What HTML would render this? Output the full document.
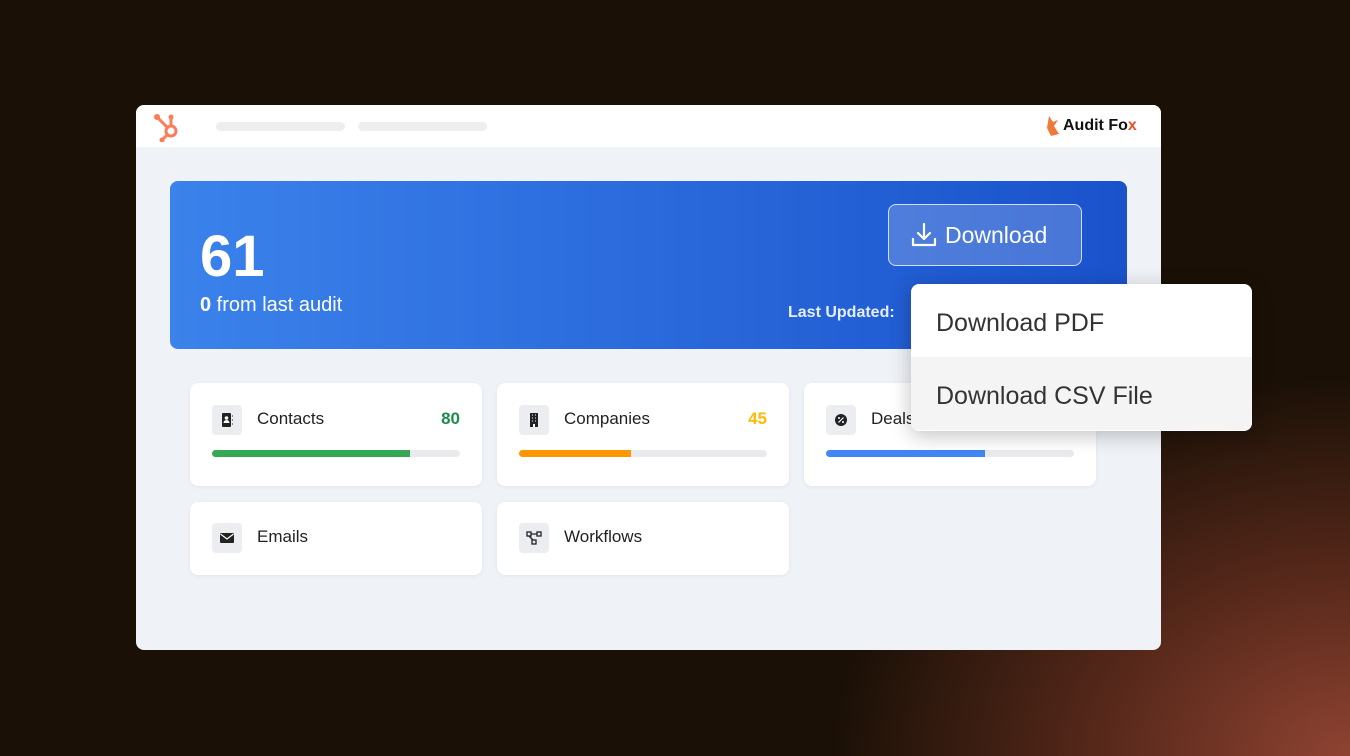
<!DOCTYPE html>
<html><head><style>
*{margin:0;padding:0;box-sizing:border-box}
body{width:1350px;height:756px;overflow:hidden;font-family:"Liberation Sans",sans-serif;
background:radial-gradient(ellipse 520px 380px at 1350px 756px,#8f4332 0%,#5a2a1c 45%,#1a1006 100%),#1a1006;position:relative}
.win{position:absolute;left:136px;top:105px;width:1025px;height:545px;background:#eff2f7;border-radius:8px;overflow:hidden}
.top{height:42px;background:#fff;position:relative}
.pill{position:absolute;top:17px;height:9px;border-radius:5px;background:#eeeeee}
.hero{position:absolute;left:34px;top:76px;width:957px;height:168px;border-radius:8px;background:linear-gradient(90deg,#3b82eb,#1a52cc);color:#fff}
.card{position:absolute;background:#fff;border-radius:8px;box-shadow:0 1px 4px rgba(0,0,0,.06)}
.ic{position:absolute;left:22px;width:30px;height:30px;border-radius:4px;background:#ebedf0}
.ic svg{position:absolute;left:7px;top:7px}
.lbl{position:absolute;left:67px;font-size:17px;color:#222}
.bar{position:absolute;left:22px;top:67px;width:248px;height:7px;border-radius:4px;background:#e8eaed;overflow:hidden}
.bar i{display:block;height:100%}
.dd{position:absolute;left:911px;top:284px;width:341px;height:147px;background:#fff;border-radius:8px;box-shadow:0 4px 20px rgba(0,0,0,.25);overflow:hidden}
.dd div{height:73px;line-height:78px;padding-left:25px;font-size:25px;color:#333}
</style></head><body>
<div class="win">
 <div class="top">
  <svg style="position:absolute;left:17px;top:7px" width="30" height="30" viewBox="0 0 30 30"><g fill="none" stroke="#ff7a59" stroke-width="3"><circle cx="18" cy="19" r="5"/><line x1="4" y1="5" x2="14" y2="15"/><line x1="18" y1="6" x2="18" y2="13"/><line x1="14" y1="23" x2="9" y2="28"/></g><circle cx="4" cy="5" r="3" fill="#ff7a59"/><circle cx="18" cy="5" r="2.5" fill="#ff7a59"/><circle cx="9" cy="28" r="2.5" fill="#ff7a59"/></svg>
  <div class="pill" style="left:80px;width:129px"></div>
  <div class="pill" style="left:222px;width:129px"></div>
  <svg style="position:absolute;left:910px;top:11px" width="14" height="20" viewBox="0 0 14 20"><path d="M3 0 L7 6 L12 4 L8 10 L13 18 L5 20 L1 12 Z" fill="#f07a3a"/></svg>
  <div style="position:absolute;left:927px;top:12px;font-weight:bold;font-size:16px;color:#111">Audit Fo<span style="color:#e8502a">x</span></div>
 </div>
 <div class="hero">
  <div style="position:absolute;left:30px;top:42px;font-size:58px;font-weight:bold">61</div>
  <div style="position:absolute;left:30px;top:113px;font-size:20px"><b>0</b> from last audit</div>
  <div style="position:absolute;left:718px;top:23px;width:194px;height:62px;border:1.5px solid #cfe0ff;border-radius:8px;background:rgba(255,255,255,.2);font-size:23px;line-height:60px;padding-left:56px">Download
   <svg style="position:absolute;left:22px;top:17px" width="26" height="26" viewBox="0 0 26 26" fill="none" stroke="#fff" stroke-width="2.2" stroke-linecap="round" stroke-linejoin="round"><path d="M13 2v15M7 11l6 6 6-6M2 17v6h22v-6"/></svg></div>
  <div style="position:absolute;left:618px;top:123px;font-size:16px;font-weight:bold;color:#e6eeff">Last Updated:</div>
 </div>
 <div class="card" style="left:54px;top:278px;width:292px;height:103px"><div class="ic" style="top:22px"><svg width="16" height="16" viewBox="0 0 16 16"><rect x="3" y="1" width="9" height="14" rx="1" fill="#222"/><circle cx="7.5" cy="6" r="1.8" fill="#fff"/><path d="M4.5 11a3 3 0 0 1 6 0z" fill="#fff"/><path d="M13 4h1M13 8h1M13 12h1" stroke="#222"/></svg></div><div class="lbl" style="top:26px">Contacts</div><div style="position:absolute;right:22px;top:26px;font-size:17px;font-weight:bold;color:#1f8a4c">80</div><div class="bar"><i style="width:80%;background:#34a853"></i></div></div>
 <div class="card" style="left:361px;top:278px;width:292px;height:103px"><div class="ic" style="top:22px"><svg width="16" height="16" viewBox="0 0 16 16"><rect x="4" y="1" width="8" height="14" fill="#222"/><path d="M6 3h1M9 3h1M6 6h1M9 6h1M6 9h1M9 9h1" stroke="#fff"/><rect x="7" y="12" width="2" height="3" fill="#fff"/></svg></div><div class="lbl" style="top:26px">Companies</div><div style="position:absolute;right:22px;top:26px;font-size:17px;font-weight:bold;color:#fbbc05">45</div><div class="bar"><i style="width:45%;background:#ff9800"></i></div></div>
 <div class="card" style="left:668px;top:278px;width:292px;height:103px"><div class="ic" style="top:22px"><svg width="16" height="16" viewBox="0 0 16 16"><circle cx="8" cy="8" r="6" fill="#222"/><path d="M5.5 10.5l5-5" stroke="#fff" stroke-width="1.2"/><circle cx="6" cy="6" r="1" fill="#fff"/><circle cx="10" cy="10" r="1" fill="#fff"/></svg></div><div class="lbl" style="top:26px">Deals</div><div class="bar"><i style="width:64%;background:#4285f4"></i></div></div>
 <div class="card" style="left:54px;top:397px;width:292px;height:73px"><div class="ic" style="top:21px"><svg width="16" height="16" viewBox="0 0 16 16"><rect x="1" y="3" width="14" height="10" rx="1" fill="#222"/><path d="M1.5 4l6.5 5 6.5-5" stroke="#fff" fill="none" stroke-width="1.2"/></svg></div><div class="lbl" style="top:25px">Emails</div></div>
 <div class="card" style="left:361px;top:397px;width:292px;height:73px"><div class="ic" style="top:21px"><svg width="16" height="16" viewBox="0 0 16 16" fill="none" stroke="#222" stroke-width="1.3"><rect x="1" y="2" width="4" height="4"/><rect x="11" y="2" width="4" height="4"/><rect x="6" y="10" width="4" height="4"/><path d="M5 4h6M3 6l4 4"/></svg></div><div class="lbl" style="top:25px">Workflows</div></div>
</div>
<div class="dd"><div>Download PDF</div><div style="background:#f4f4f4">Download CSV File</div></div>
</body></html>
